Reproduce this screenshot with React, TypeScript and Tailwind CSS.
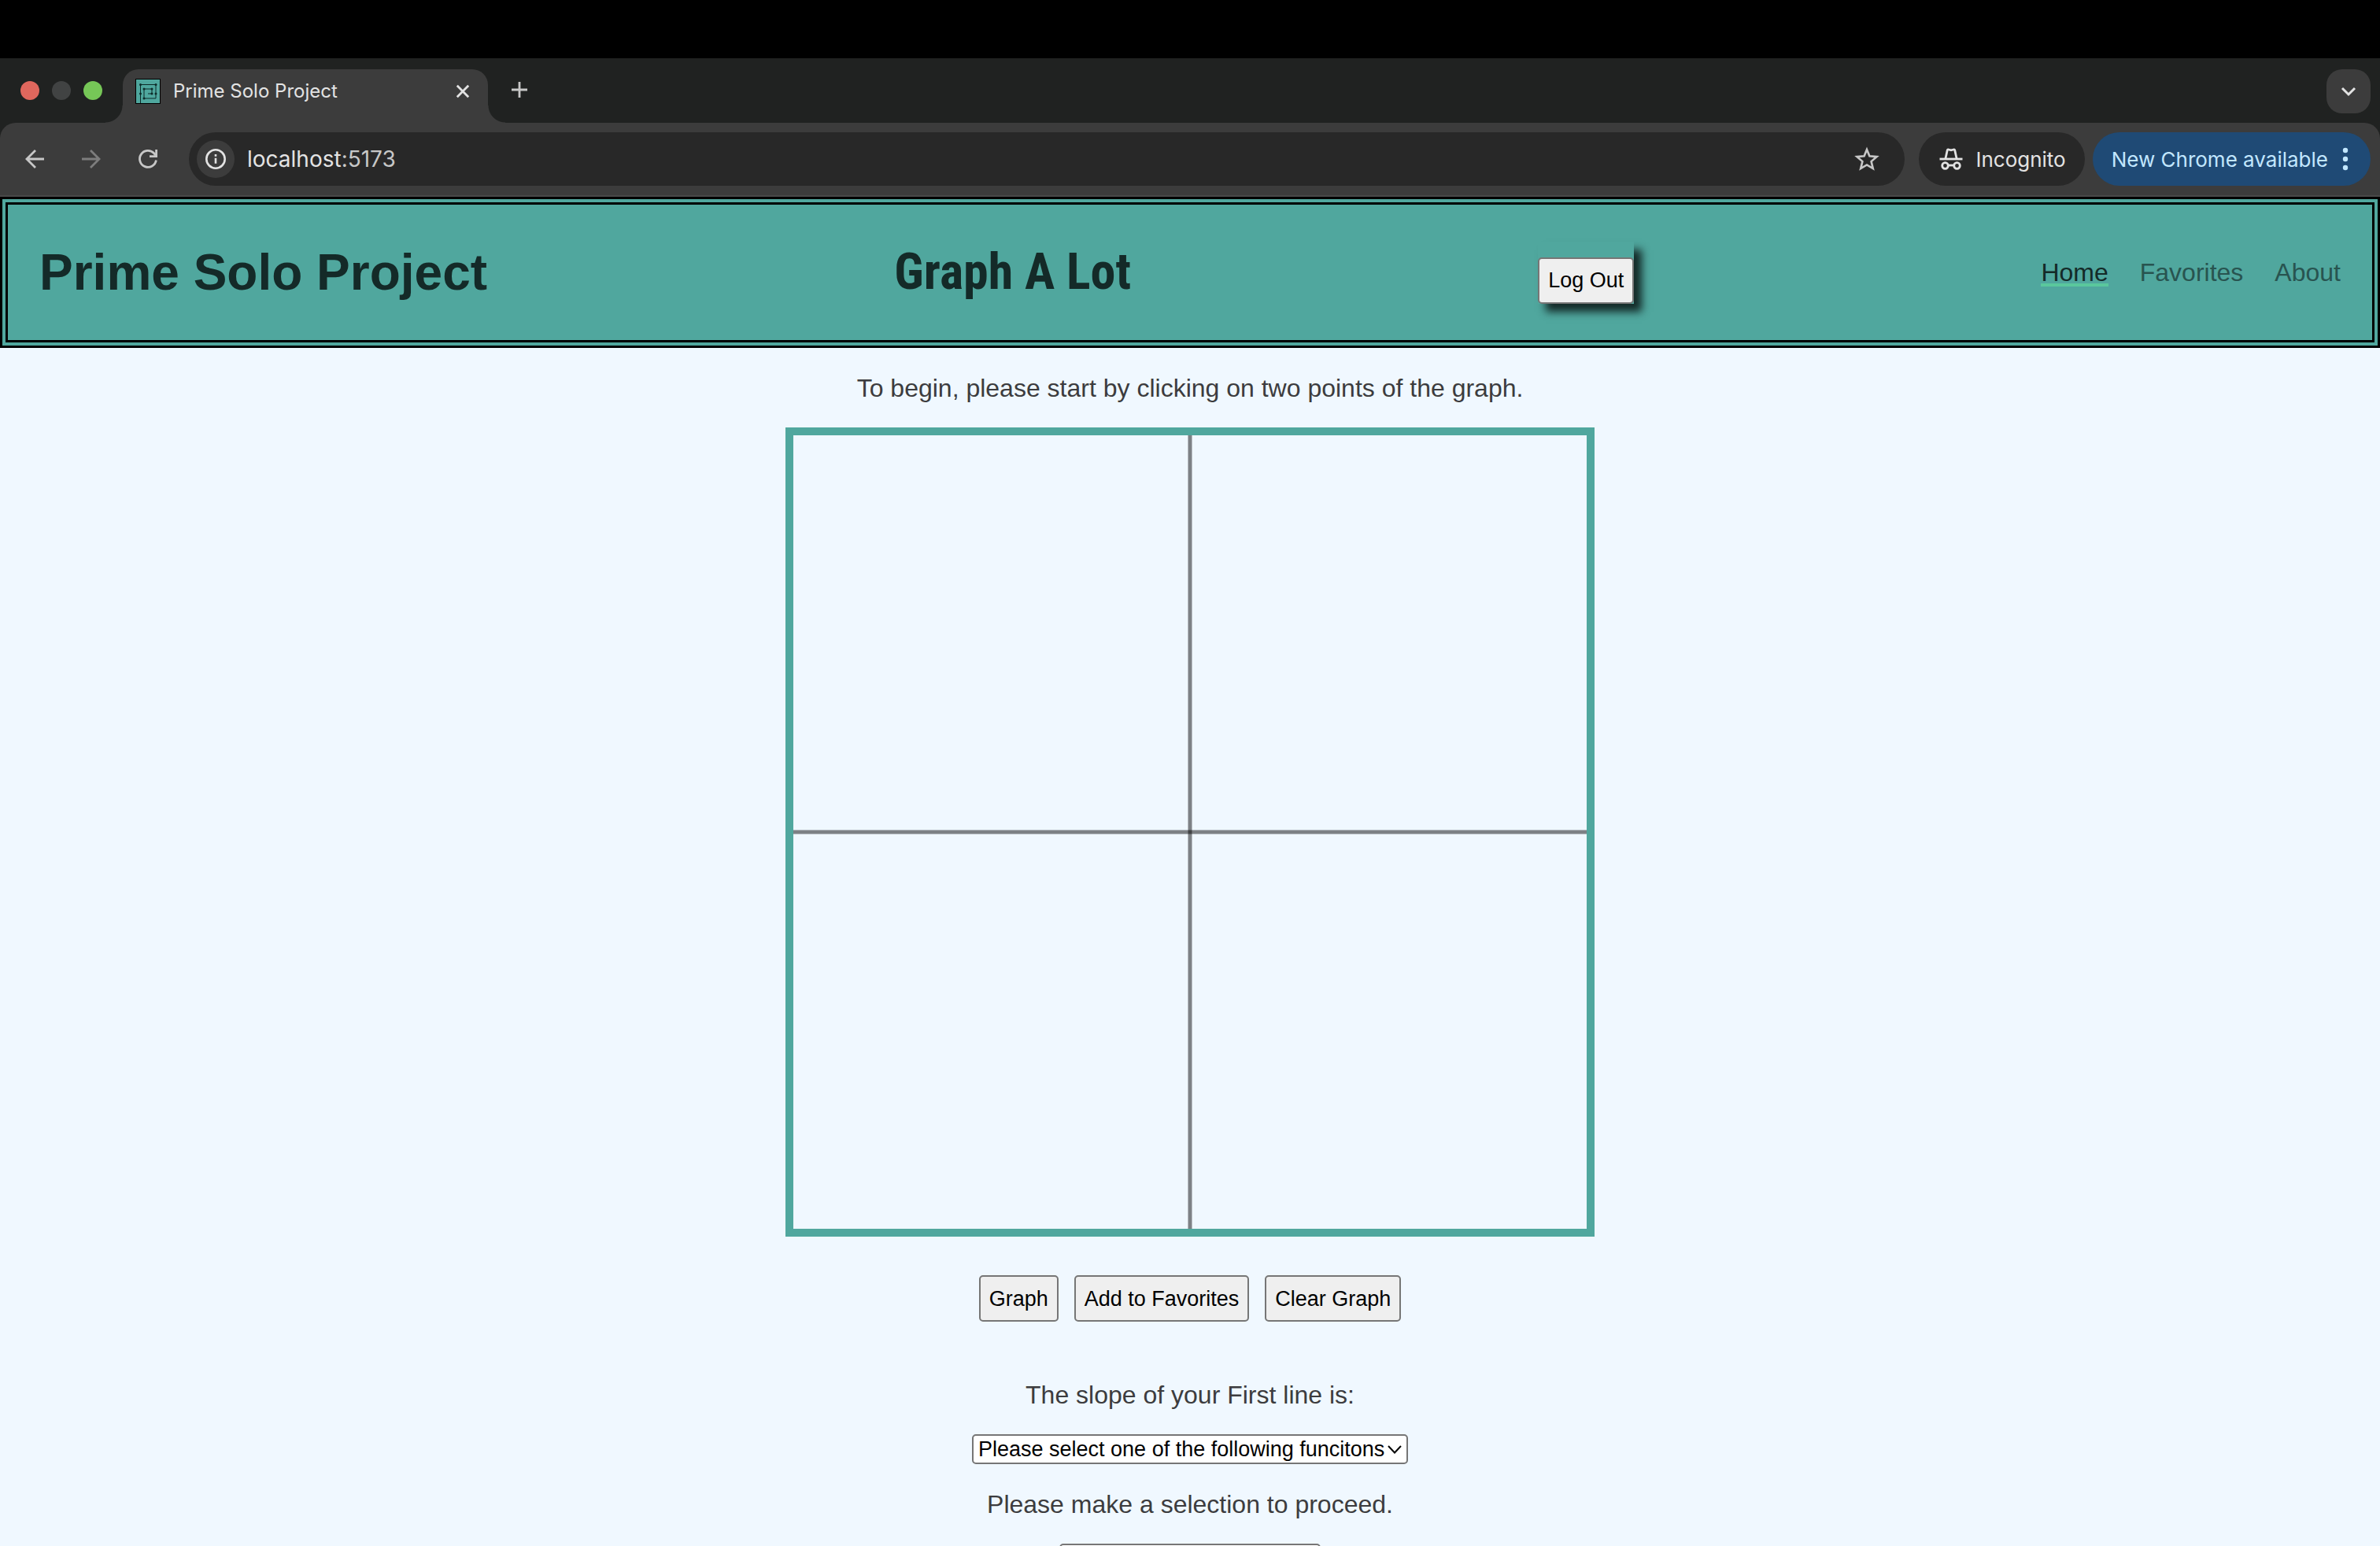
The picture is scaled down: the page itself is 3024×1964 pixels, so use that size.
import React from "react";

const sans = "font-['Liberation_Sans',Arial,sans-serif]";

function TabStrip() {
  return (
    <div className="flex h-[82px] items-start bg-[#202221] pl-[26px] pr-3 pt-[14px] font-['Inter',sans-serif]">
      <div className="flex h-[54px] items-center gap-4">
        <span className="size-6 rounded-full bg-[#e0675d]" />
        <span className="size-6 rounded-full bg-[#414343]" />
        <span className="size-6 rounded-full bg-[#76c757]" />
      </div>
      <div className="flex items-end self-stretch">
        <div className="ml-1 size-[22px] bg-[radial-gradient(circle_at_0_0,#202221_21px,#3c3c3c_22px)]" />
        <div className="flex h-[68px] w-[464px] items-center rounded-t-[20px] bg-[#3c3c3c] pb-3 pl-4 pr-5">
          <Favicon />
          <span className="ml-4 flex-1 whitespace-nowrap text-2xl text-[#e3e3e3]">Prime Solo Project</span>
          <button aria-label="Close tab">
            <svg className="size-6" viewBox="0 0 24 24" stroke="#e3e3e3" strokeWidth="2.8">
              <path d="M4.800 4.800l14.400 14.400M19.200 4.800L4.800 19.200" />
            </svg>
          </button>
        </div>
        <div className="size-[22px] bg-[radial-gradient(circle_at_100%_0,#202221_21px,#3c3c3c_22px)]" />
      </div>
      <button aria-label="New tab" className="ml-1 flex h-[52px] items-center">
        <svg className="size-7" viewBox="0 0 28 28" stroke="#c7c7c7" strokeWidth="2.8">
          <path d="M14 4v20M4 14h20" />
        </svg>
      </button>
      <button aria-label="Search tabs" className="ml-auto flex size-14 items-center justify-center rounded-[20px] bg-[#3c3c3c]">
        <svg className="size-6" viewBox="0 0 24 24" fill="none" stroke="#e3e3e3" strokeWidth="3">
          <path d="M4 8l8 8 8-8" />
        </svg>
      </button>
    </div>
  );
}

function Favicon() {
  return (
    <svg className="size-8" viewBox="0 0 32 32" fill="none" stroke="#0d2b29">
      <rect x="0.5" y="0.5" width="31" height="31" fill="#4fa79e" stroke="#000" />
      <path d="M6.500 31V7.500H26V25H11V13H21V19H16" strokeWidth="1" />
      <g fill="#0d2b29" stroke="none">
        <circle cx="6.500" cy="7.500" r="1.500" />
        <circle cx="26" cy="7.500" r="1.500" />
        <circle cx="6.500" cy="19" r="1.500" />
        <circle cx="26" cy="19" r="1.500" />
        <circle cx="11" cy="25" r="1.500" />
        <circle cx="11" cy="13" r="1.500" />
        <circle cx="21" cy="13" r="1.500" />
        <circle cx="21" cy="19" r="1.500" />
      </g>
    </svg>
  );
}

function Toolbar() {
  return (
    <div className="bg-[#202221] font-['Inter',sans-serif]">
      <div className="flex h-[94px] items-center rounded-t-[20px] border-b-2 border-[#494949] bg-[#3c3c3c] pl-7 pr-3">
        <button aria-label="Back">
          <svg className="size-8" viewBox="0 0 32 32" fill="none" stroke="#c7c7c7" strokeWidth="2.800">
            <path d="M28 16H6M17 5L6 16l11 11" />
          </svg>
        </button>
        <button aria-label="Forward" className="ml-10">
          <svg className="size-8" viewBox="0 0 32 32" fill="none" stroke="#7d7d7d" strokeWidth="2.800">
            <path d="M4 16h22M15 5l11 11-11 11" />
          </svg>
        </button>
        <button aria-label="Reload" className="ml-10">
          <svg className="size-8" viewBox="0 0 32 32" fill="none" stroke="#c7c7c7" strokeWidth="2.800">
            <path d="M26.400 17.500A10.500 10.500 0 1 1 23.500 8.500l2.500 3" />
            <path d="M26.600 4v8.600H18" />
          </svg>
        </button>
        <div className="ml-9 flex h-[68px] flex-1 items-center rounded-full bg-[#282828] pl-[10px] pr-8">
          <button aria-label="Site information" className="flex size-12 items-center justify-center rounded-full bg-[#3c3c3c]">
            <svg className="size-7" viewBox="0 0 28 28" fill="none" stroke="#e3e3e3" strokeWidth="2.600">
              <circle cx="14" cy="14" r="11.700" />
              <path d="M14 12.800v7M14 8v2.700" />
            </svg>
          </button>
          <div className="ml-4 text-[28px] text-[#c7c7c7]"><span className="text-[#e3e3e3]">localhost</span>:5173</div>
          <button aria-label="Bookmark" className="ml-auto">
            <svg className="size-8" viewBox="0 0 32 32" fill="none" stroke="#c7c7c7" strokeWidth="2.600">
              <path d="M16 4l3.400 8.300 9.200.8-7 6 2.200 9L16 23.400l-7.800 4.700 2.200-9-7-6 9.200-.8z" />
            </svg>
          </button>
        </div>
        <div className="ml-[18px] flex h-[68px] items-center rounded-full bg-[#282828] pl-[26px] pr-6 text-[26px] text-[#e3e3e3]">
          <Incognito />
          <span className="ml-4">Incognito</span>
        </div>
        <button className="ml-[10px] flex h-[68px] items-center rounded-full bg-[#1f4a75] pl-6 pr-7 text-[26px] text-[#c2e7ff]">
          New Chrome available
          <svg className="ml-[18px] h-10 w-2" viewBox="0 0 8 40" fill="#c2e7ff">
            <circle cx="4" cy="9" r="3.200" />
            <circle cx="4" cy="20" r="3.200" />
            <circle cx="4" cy="31" r="3.200" />
          </svg>
        </button>
      </div>
    </div>
  );
}

function Incognito() {
  return (
    <svg className="h-7 w-[30px]" viewBox="0 0 30 28" fill="none" stroke="#e3e3e3" strokeWidth="2.800">
      <path d="M0.500 14h29" />
      <path d="M7.800 14L10.200 3c.2-1 1-1.300 1.800-1l3 .8 3-.8c.8-.3 1.600 0 1.800 1l2.400 11" />
      <circle cx="7.500" cy="22.500" r="3.800" />
      <circle cx="22.500" cy="22.500" r="3.800" />
      <path d="M11.300 22h7.400" />
    </svg>
  );
}

function Header() {
  return (
    <header className="flex h-48 items-center justify-between border-[10px] border-double border-black bg-[#50a79e] px-10 text-[#142a28]">
      <h1 className="text-[64px] font-bold">Prime Solo Project</h1>
      <h1 className="font-['Arial_Narrow','Roboto_Condensed',sans-serif] text-[64px] font-bold">Graph A Lot</h1>
      <div className="pt-5 shadow-[10px_10px_10px_#142a28]">
        <Button>Log Out</Button>
      </div>
      <nav className="flex gap-10 text-[32px] leading-9 text-[#285450]">
        <a href="#home" className="text-[#142a28] shadow-[inset_0_-4px_#5ac79c]">Home</a>
        <a href="#favorites">Favorites</a>
        <a href="#about">About</a>
      </nav>
    </header>
  );
}

function Button({ children }: { children: React.ReactNode }) {
  return (
    <button className="block h-[59px] rounded-[5px] border-2 border-[#767676] bg-[#efefef] px-[11px] text-[27px] text-black">
      {children}
    </button>
  );
}

export default function App() {
  return (
    <div className={`h-screen overflow-hidden bg-[#f0f8ff] text-[#3c3c3e] ${sans}`}>
      <div className="h-[74px] bg-black" />
      <TabStrip />
      <Toolbar />
      <Header />
      <main className="flex flex-col items-center text-[32px] leading-9">
        <p className="mt-[33px]">To begin, please start by clicking on two points of the graph.</p>
        <div className="mt-8 border-[10px] border-[#50a79e]">
          <svg className="block size-[1008px]" viewBox="0 0 1008 1008" stroke="#000" strokeOpacity="0.48" strokeWidth="5">
            <path d="M504 0v1008" />
            <path d="M0 504h1008" />
          </svg>
        </div>
        <div className="mt-[49px] flex gap-5">
          <Button>Graph</Button>
          <Button>Add to Favorites</Button>
          <Button>Clear Graph</Button>
        </div>
        <label htmlFor="first-line" className="mt-[75px]">The slope of your First line is:</label>
        <div className="relative mt-8">
          <select id="first-line" className="block h-[38px] w-[554px] appearance-none rounded-[5px] border-2 border-[#767676] bg-white pl-[6px] text-[27px] leading-8 text-black">
            <option>Please select one of the following funcitons</option>
          </select>
          <svg className="pointer-events-none absolute right-2 top-[11px] h-4 w-5" viewBox="0 0 20 16" fill="none" stroke="#000" strokeWidth="2">
            <path d="M3 4l8 8.500L19 4" />
          </svg>
        </div>
        <p className="mt-[33px]">Please make a selection to proceed.</p>
        <input aria-label="Value" className="mt-8 h-11 w-[332px] rounded-[5px] border-2 border-[#767676] bg-white" />
      </main>
    </div>
  );
}
